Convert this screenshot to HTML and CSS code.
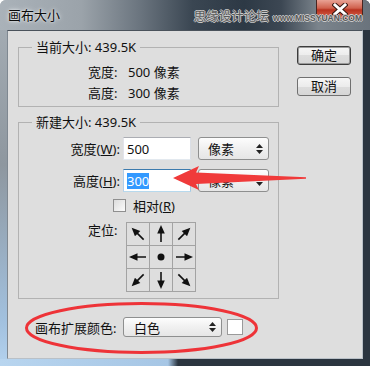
FILE: index.html
```html
<!DOCTYPE html>
<html>
<head>
    <meta charset="UTF-8">
    <title>画布大小</title>
    <link rel="stylesheet" href="styles.css">
</head>
<body>
<div class="window">
    <!-- 标题栏 -->
    <div class="titlebar">
        <span class="title">画布大小</span>
        <span class="close">
            <svg width="16" height="13" viewBox="0 0 16 13">
                <path d="M3 2 L13 11 M13 2 L3 11" stroke="#3a1a14" stroke-width="5" stroke-linecap="square"/>
                <path d="M3 2 L13 11 M13 2 L3 11" stroke="#fff" stroke-width="3" stroke-linecap="square"/>
            </svg>
        </span>
    </div>
    <span class="watermark">思缘设计论坛 <small>www.MISSYUAN.COM</small></span>

    <div class="client">
        <div class="main">
            <fieldset class="group">
                <legend>当前大小: 439.5K</legend>
                <div class="info-row info-first"><span class="info-label">宽度:</span><span>500 像素</span></div>
                <div class="info-row"><span class="info-label">高度:</span><span>300 像素</span></div>
            </fieldset>

            <fieldset class="group group-new">
                <legend>新建大小: 439.5K</legend>
                <div class="field-row">
                    <span class="field-label">宽度(<u>W</u>):</span>
                    <span class="text-input">500</span>
                    <span class="dropdown">像素<svg class="spin" width="7" height="10" viewBox="0 0 7 10"><path d="M3.5 0 L7 4 H0Z M0 6 H7 L3.5 10Z" fill="#222"/></svg></span>
                </div>
                <div class="field-row field-second">
                    <span class="field-label">高度(<u>H</u>):</span>
                    <span class="text-input focused"><span class="selected">300</span></span>
                    <span class="dropdown">像素<svg class="spin" width="7" height="10" viewBox="0 0 7 10"><path d="M3.5 0 L7 4 H0Z M0 6 H7 L3.5 10Z" fill="#222"/></svg></span>
                </div>
                <div class="check-row">
                    <span class="checkbox"></span>
                    <span class="check-text">相对(<u>R</u>)</span>
                </div>
                <div class="anchor-row">
                    <span class="anchor-label">定位:</span>
                    <div class="anchor-grid">
                        <span class="cell"><svg width="22" height="22" viewBox="0 0 22 22"><g transform="rotate(-45 11 11)"><path d="M11 19 V8" stroke="#111" stroke-width="1.6"/><path d="M11 2 L7.2 10.5 H14.8Z" fill="#111"/></g></svg></span>
                        <span class="cell"><svg width="22" height="22" viewBox="0 0 22 22"><g><path d="M11 19 V8" stroke="#111" stroke-width="1.6"/><path d="M11 2 L7.2 10.5 H14.8Z" fill="#111"/></g></svg></span>
                        <span class="cell"><svg width="22" height="22" viewBox="0 0 22 22"><g transform="rotate(45 11 11)"><path d="M11 19 V8" stroke="#111" stroke-width="1.6"/><path d="M11 2 L7.2 10.5 H14.8Z" fill="#111"/></g></svg></span>
                        <span class="cell"><svg width="22" height="22" viewBox="0 0 22 22"><g transform="rotate(-90 11 11)"><path d="M11 19 V8" stroke="#111" stroke-width="1.6"/><path d="M11 2 L7.2 10.5 H14.8Z" fill="#111"/></g></svg></span>
                        <span class="cell"><svg width="22" height="22" viewBox="0 0 22 22"><circle cx="11" cy="11" r="3.5" fill="#111"/></svg></span>
                        <span class="cell"><svg width="22" height="22" viewBox="0 0 22 22"><g transform="rotate(90 11 11)"><path d="M11 19 V8" stroke="#111" stroke-width="1.6"/><path d="M11 2 L7.2 10.5 H14.8Z" fill="#111"/></g></svg></span>
                        <span class="cell"><svg width="22" height="22" viewBox="0 0 22 22"><g transform="rotate(-135 11 11)"><path d="M11 19 V8" stroke="#111" stroke-width="1.6"/><path d="M11 2 L7.2 10.5 H14.8Z" fill="#111"/></g></svg></span>
                        <span class="cell"><svg width="22" height="22" viewBox="0 0 22 22"><g transform="rotate(180 11 11)"><path d="M11 19 V8" stroke="#111" stroke-width="1.6"/><path d="M11 2 L7.2 10.5 H14.8Z" fill="#111"/></g></svg></span>
                        <span class="cell"><svg width="22" height="22" viewBox="0 0 22 22"><g transform="rotate(135 11 11)"><path d="M11 19 V8" stroke="#111" stroke-width="1.6"/><path d="M11 2 L7.2 10.5 H14.8Z" fill="#111"/></g></svg></span>
                    </div>
                </div>
            </fieldset>

            <div class="extend-row">
                <span class="extend-label">画布扩展颜色:</span>
                <span class="dropdown dropdown-wide">白色<svg class="spin" width="7" height="10" viewBox="0 0 7 10"><path d="M3.5 0 L7 4 H0Z M0 6 H7 L3.5 10Z" fill="#222"/></svg></span>
                <span class="swatch"></span>
            </div>
        </div>

        <div class="actions">
            <button class="btn btn-default">确定</button>
            <button class="btn">取消</button>
        </div>
    </div>

    <!-- 红色标注 -->
    <svg class="marks" width="370" height="366" viewBox="0 0 370 366">
        <polygon points="173,178 199,166 196,172.5 306,177.3 306,178.7 196,184 199,190" fill="#f03a3a"/>
        <ellipse cx="141.5" cy="328" rx="115" ry="24.5" fill="none" stroke="#ee3338" stroke-width="3"/>
    </svg>
</div>
</body>
</html>
```

FILE: styles.css
```css
/* 页面基础 */
* {
    box-sizing: border-box;
}
body {
    margin: 0;
    background: #fff;
    font-family: "Noto Sans", "Noto Sans CJK SC", sans-serif;
    font-size: 13px;
    color: #111;
}

/* 窗口外框 */
.window {
    position: relative;
    width: 370px;
    height: 366px;
    border-radius: 6px 6px 0 0;
    overflow: hidden;
    background:
        linear-gradient(90deg, #b8d5ef 0, #a6c6e5 168px, #2b3540 178px) left bottom / 100% 7px no-repeat,
        linear-gradient(180deg, #a7afb6 0, #8e979f 45%, #a2c1df 88%, #b4d2ee 100%) left top / 7px 100% no-repeat,
        #2b3540;
}

/* 标题栏 */
.titlebar {
    display: flex;
    align-items: center;
    height: 30px;
    padding: 0 0 1px 8px;
    background: linear-gradient(90deg, #aab2b9 0, #9ba3aa 22%, #6a747e 38%, #3a4652 52%, #2d3945 66%, #3c4753 76%, #7b848c 86%, #6a737c 100%);
}
.title {
    font-size: 13px;
    color: #0c0c0c;
    text-shadow: 0 0 5px rgba(255, 255, 255, 0.9), 0 0 2px rgba(255, 255, 255, 0.8);
}
.close {
    display: flex;
    align-items: center;
    justify-content: center;
    align-self: flex-start;
    margin-left: auto;
    margin-right: 7px;
    width: 47px;
    height: 19px;
    border: 1px solid #4a2520;
    border-top: none;
    border-radius: 0 0 5px 5px;
    background: linear-gradient(180deg, #e9a294 0, #d0614d 45%, #b8321f 55%, #d8664e 100%);
}
.watermark {
    position: absolute;
    right: 8px;
    top: 6px;
    font-size: 12.5px;
    color: #5b5b5b;
    white-space: nowrap;
    text-shadow: 1px 0 0 #c9c9c9, -1px 0 0 #c9c9c9, 0 1px 0 #c9c9c9, 0 -1px 0 #c9c9c9;
}
.watermark small {
    font-family: "Liberation Sans", sans-serif;
    font-size: 8.5px;
    font-weight: bold;
    margin-left: 1px;
}

/* 客户区 */
.client {
    display: flex;
    height: 329px;
    margin: 0 7px;
    padding: 8px 0 0 10px;
    border: 1px solid;
    border-color: #4a525b #b9c0c7 #b9c0c7 #7f8891;
    background: #dedede;
}
.main {
    width: 261px;
}

/* 分组框 */
.group {
    margin: 0;
    padding: 0 0 3px;
    min-width: 0;
    border: 1px solid #b2b2b2;
    border-radius: 0;
}
.group legend {
    margin-left: 13px;
    padding: 0 4px;
    line-height: 17px;
}
.info-row {
    display: flex;
    align-items: center;
    height: 21px;
    padding-left: 69px;
}
.info-first {
    margin-top: 5px;
}
.info-label {
    width: 40px;
}

.group-new {
    margin-top: 7px;
    padding-bottom: 6px;
}
.field-row {
    display: flex;
    align-items: center;
    height: 23px;
    margin-top: 6px;
}
.field-second {
    margin-top: 9px;
}
.field-label {
    width: 101px;
    margin-right: 3px;
    text-align: right;
}
.field-label u, .check-text u {
    text-underline-offset: 1px;
}
.text-input {
    display: flex;
    align-items: center;
    width: 68px;
    height: 23px;
    padding-left: 3px;
    border: 1px solid #abadb3;
    border-color: #abadb3 #dbdfe6 #e3e9ef #e2e3ea;
    background: #fff;
}
.text-input.focused {
    border-color: #3d7bad #a4c9e3 #b7d9ed #b5cfe7;
}
.selected {
    background: #3399ff;
    color: #fff;
    line-height: 16px;
}

/* 下拉框 */
.dropdown {
    display: flex;
    align-items: center;
    width: 71px;
    height: 23px;
    margin-left: 7px;
    padding: 0 5px 0 9px;
    border: 1px solid #8e8f8f;
    border-radius: 3px;
    background: linear-gradient(180deg, #fdfdfd 0, #f0f0f0 50%, #e6e6e6 100%);
}
.spin {
    margin-left: auto;
}
.dropdown-wide {
    width: 99px;
    height: 20px;
    margin-left: 0;
    padding-left: 10px;
}

/* 相对 */
.check-row {
    display: flex;
    align-items: center;
    height: 13px;
    margin-top: 7px;
    padding-left: 94px;
}
.checkbox {
    width: 13px;
    height: 13px;
    border: 1px solid #8f8f8f;
    background: linear-gradient(135deg, #dcdcdc, #fbfbfb);
}
.check-text {
    margin-left: 7px;
}

/* 定位 */
.anchor-row {
    display: flex;
    align-items: flex-start;
    margin-top: 10px;
    padding-left: 69px;
}
.anchor-label {
    width: 38px;
    line-height: 17px;
}
.anchor-grid {
    display: grid;
    grid-template-columns: repeat(3, 22px);
    grid-template-rows: repeat(3, 22px);
    gap: 1px;
    padding: 1px;
    background: #a3a3a3;
}
.cell {
    display: block;
    background: #dedede;
}
.cell svg {
    display: block;
}

/* 扩展颜色 */
.extend-row {
    display: flex;
    align-items: center;
    height: 20px;
    margin-top: 18px;
    padding-left: 17px;
}
.extend-label {
    width: 88px;
}
.swatch {
    width: 16px;
    height: 16px;
    margin-left: 5px;
    border: 1px solid #9a9a9a;
    background: #fff;
}

/* 按钮 */
.actions {
    display: flex;
    flex-direction: column;
    gap: 12px;
    margin: 7px 0 0 18px;
}
.btn {
    width: 54px;
    height: 19px;
    padding: 0;
    border: 1px solid #707070;
    border-radius: 3px;
    background: linear-gradient(180deg, #f6f6f6 0, #ececec 50%, #dddddd 50%, #d6d6d6 100%);
    font-family: inherit;
    font-size: 13px;
    line-height: 17px;
    color: #111;
}
.btn-default {
    border-color: #3c3c3c;
    box-shadow: inset 0 0 0 1px #9a9a9a;
}

/* 红色标注层 */
.marks {
    position: absolute;
    left: 0;
    top: 0;
    pointer-events: none;
}
```
